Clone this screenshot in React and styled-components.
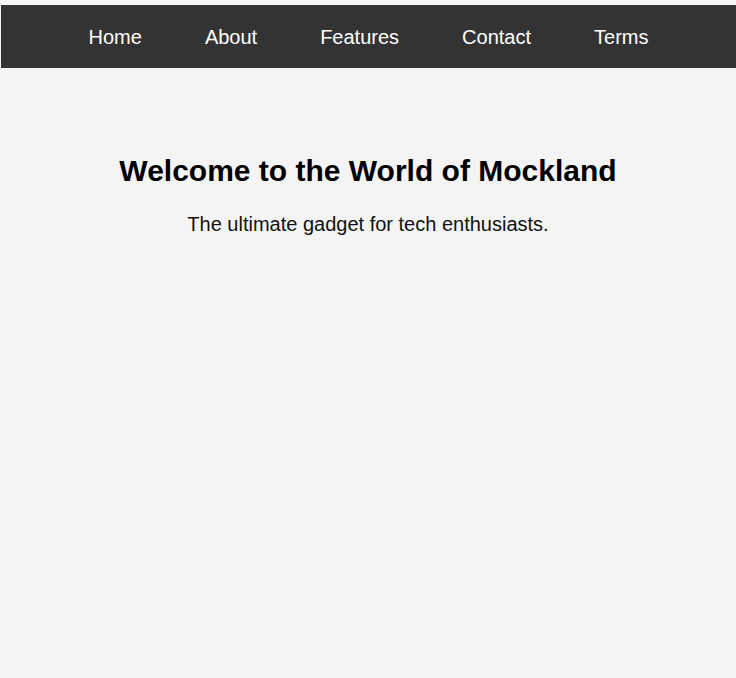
import React from 'react';
import styled, { createGlobalStyle } from 'styled-components';

// Global page reset
const GlobalStyle = createGlobalStyle`
  html, body {
    margin: 0;
    padding: 0;
    background: #f4f4f4;
    font-family: "Liberation Sans", Arial, sans-serif;
  }
`;

const Page = styled.div`
  min-height: 678px;
  background: #f4f4f4;
`;

// Top navigation bar
const Navbar = styled.nav`
  margin: 5px 0 0 1px;
  background: #333333;
`;

const NavLinks = styled.ul`
  list-style: none;
  display: flex;
  justify-content: center;
  gap: 63px;
  margin: 0;
  padding: 21px 0 19px;

  a {
    color: #ffffff;
    text-decoration: none;
    font-size: 20px;
    line-height: 23px;
  }
`;

const Hero = styled.section`
  padding: 86px 20px 0;
  text-align: center;
`;

const Title = styled.h1`
  margin: 0 0 25px;
  font-size: 30px;
  font-weight: bold;
  color: #000000;
`;

const Tagline = styled.p`
  margin: 0;
  font-size: 20px;
  color: #111111;
`;

const links = ['Home', 'About', 'Features', 'Contact', 'Terms'];

export default function App() {
  return (
    <>
      <GlobalStyle />
      <Page>
        <Navbar>
          <NavLinks>
            {links.map((l) => (
              <li key={l}><a href={`#${l.toLowerCase()}`}>{l}</a></li>
            ))}
          </NavLinks>
        </Navbar>

        <Hero>
          <Title>Welcome to the World of Mockland</Title>
          <Tagline>The ultimate gadget for tech enthusiasts.</Tagline>
        </Hero>
      </Page>
    </>
  );
}
